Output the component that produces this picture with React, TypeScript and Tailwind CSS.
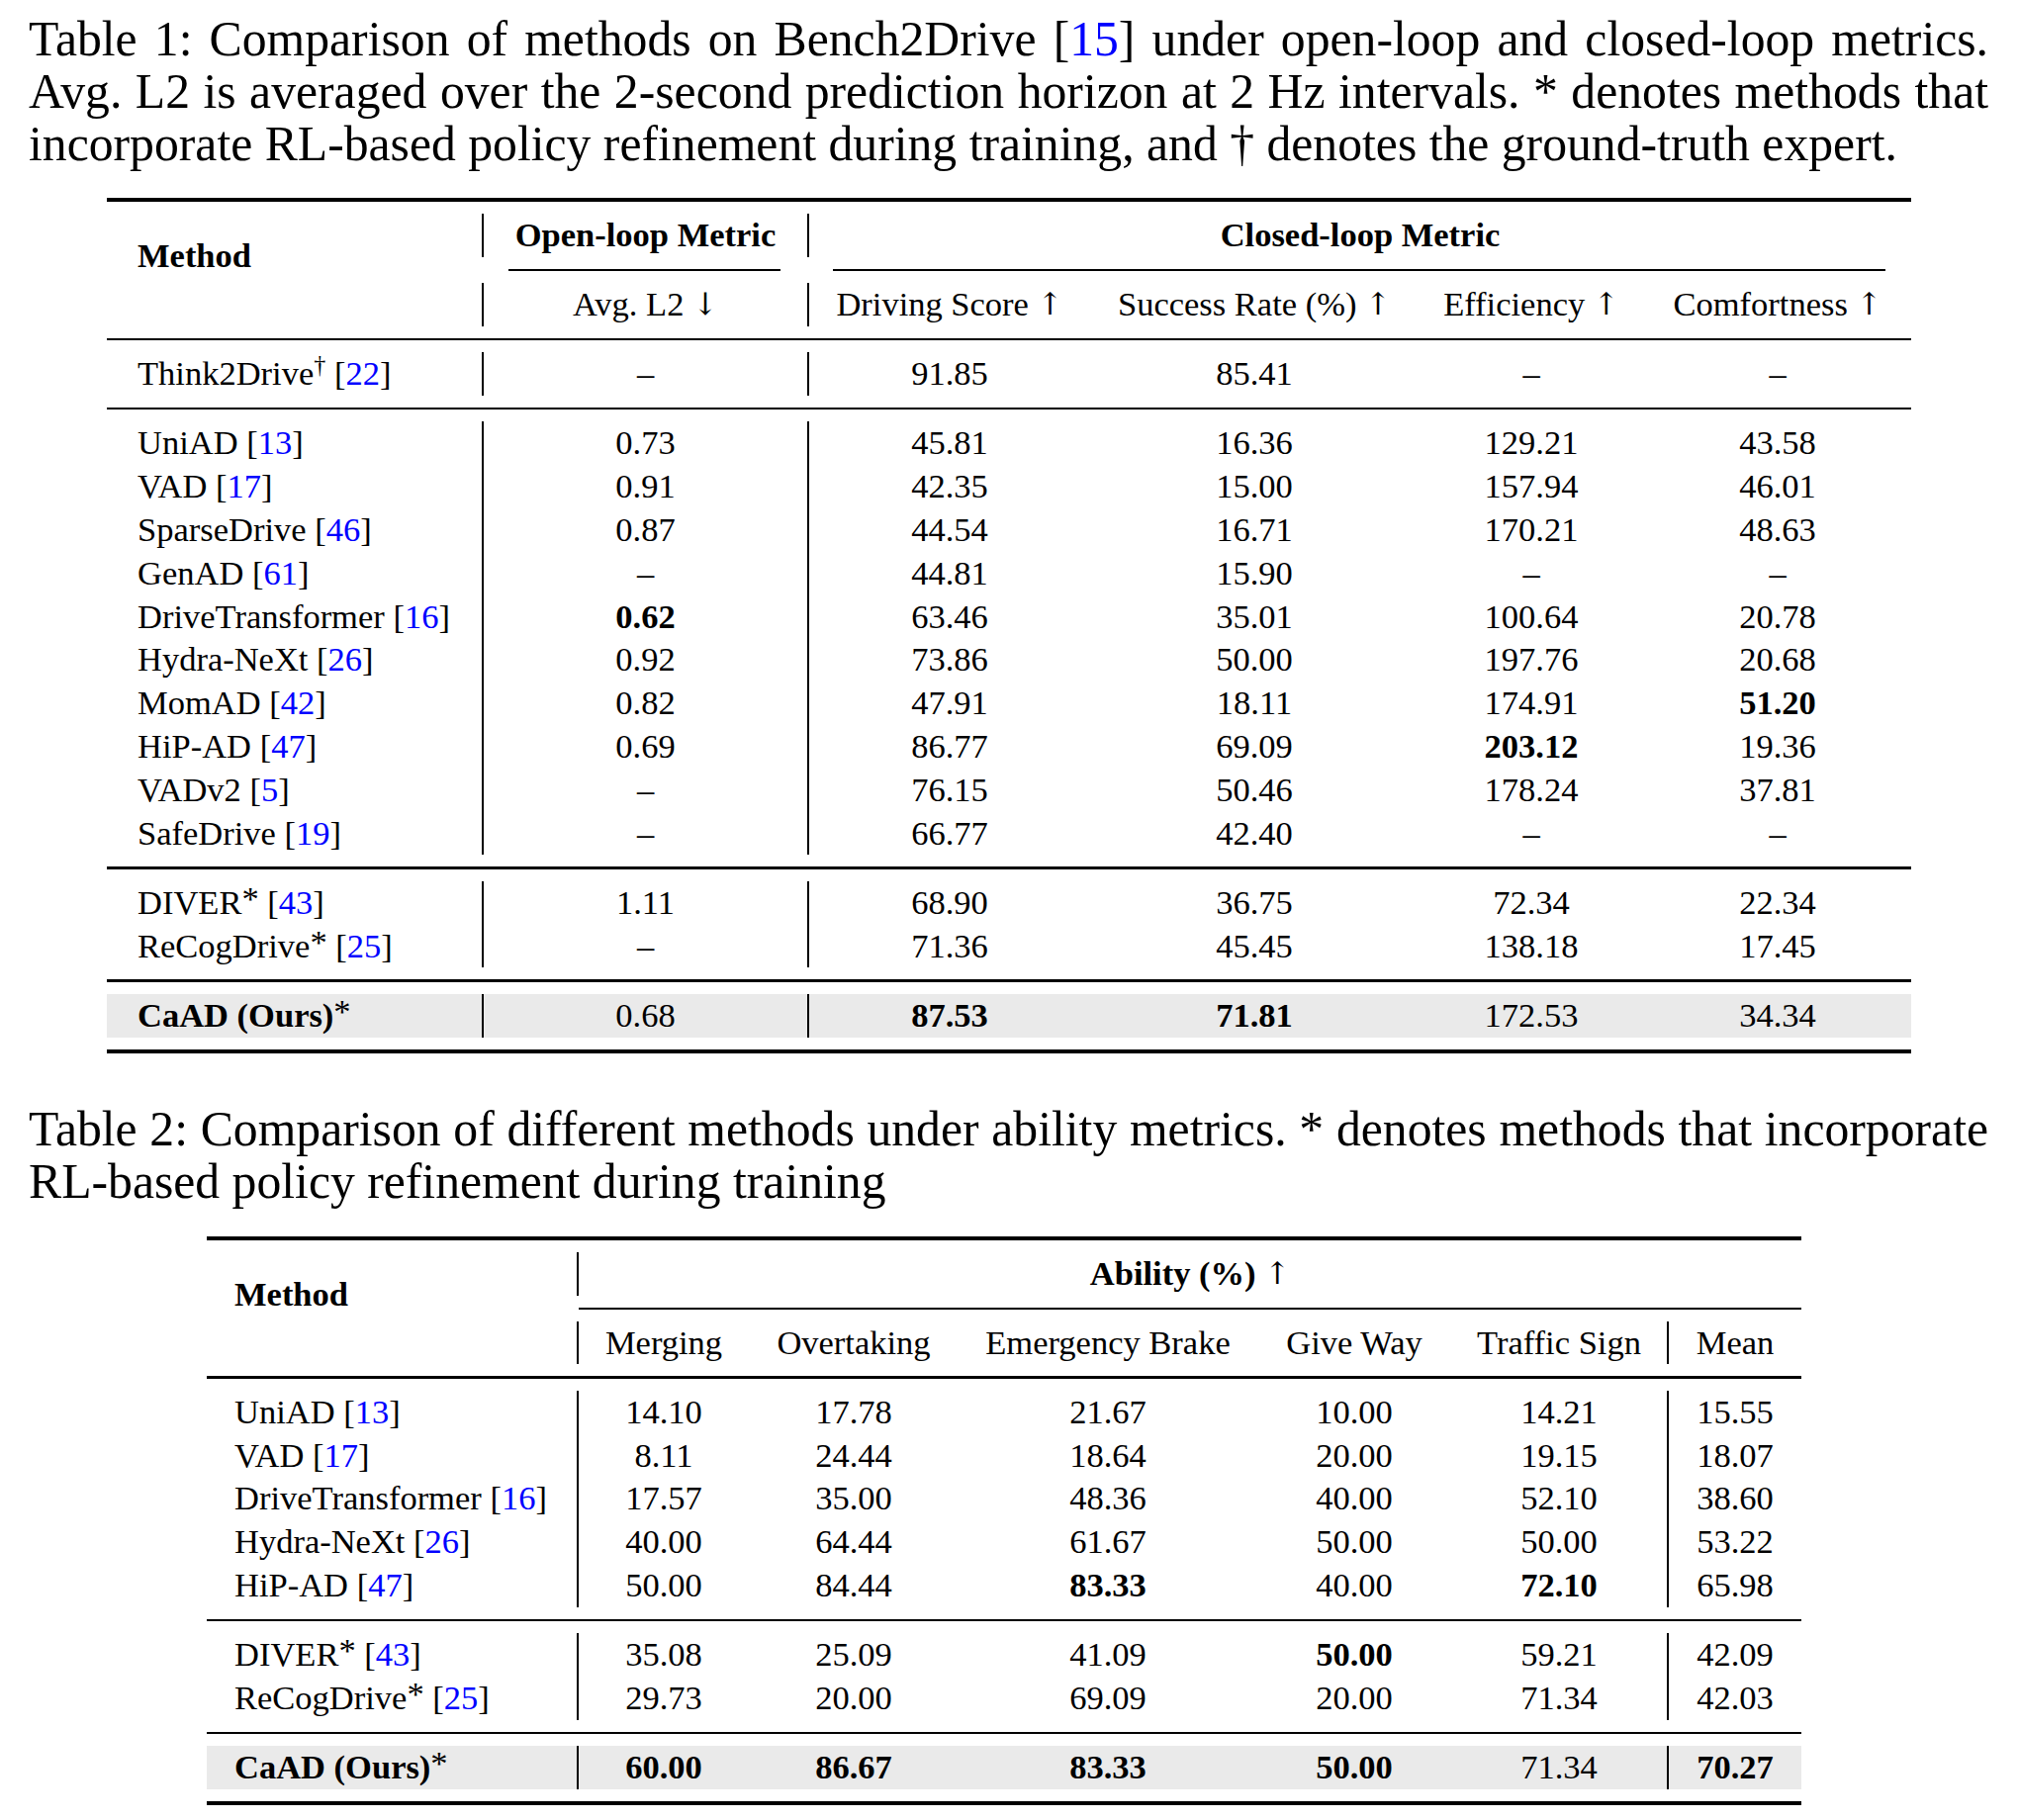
import React from "react";

type Method = { name: string; mark?: string; cite?: string; bold?: boolean };

// "!" in front of a value marks it as bold
const table1: { m: Method; v: string[] }[][] = [
  [{ m: { name: "Think2Drive", mark: "†", cite: "22" }, v: ["–", "91.85", "85.41", "–", "–"] }],
  [
    { m: { name: "UniAD", cite: "13" }, v: ["0.73", "45.81", "16.36", "129.21", "43.58"] },
    { m: { name: "VAD", cite: "17" }, v: ["0.91", "42.35", "15.00", "157.94", "46.01"] },
    { m: { name: "SparseDrive", cite: "46" }, v: ["0.87", "44.54", "16.71", "170.21", "48.63"] },
    { m: { name: "GenAD", cite: "61" }, v: ["–", "44.81", "15.90", "–", "–"] },
    { m: { name: "DriveTransformer", cite: "16" }, v: ["!0.62", "63.46", "35.01", "100.64", "20.78"] },
    { m: { name: "Hydra-NeXt", cite: "26" }, v: ["0.92", "73.86", "50.00", "197.76", "20.68"] },
    { m: { name: "MomAD", cite: "42" }, v: ["0.82", "47.91", "18.11", "174.91", "!51.20"] },
    { m: { name: "HiP-AD", cite: "47" }, v: ["0.69", "86.77", "69.09", "!203.12", "19.36"] },
    { m: { name: "VADv2", cite: "5" }, v: ["–", "76.15", "50.46", "178.24", "37.81"] },
    { m: { name: "SafeDrive", cite: "19" }, v: ["–", "66.77", "42.40", "–", "–"] },
  ],
  [
    { m: { name: "DIVER", mark: "*", cite: "43" }, v: ["1.11", "68.90", "36.75", "72.34", "22.34"] },
    { m: { name: "ReCogDrive", mark: "*", cite: "25" }, v: ["–", "71.36", "45.45", "138.18", "17.45"] },
  ],
];

const ours1 = { m: { name: "CaAD (Ours)", mark: "*", bold: true }, v: ["0.68", "!87.53", "!71.81", "172.53", "34.34"] };

const table2: { m: Method; v: string[] }[][] = [
  [
    { m: { name: "UniAD", cite: "13" }, v: ["14.10", "17.78", "21.67", "10.00", "14.21", "15.55"] },
    { m: { name: "VAD", cite: "17" }, v: ["8.11", "24.44", "18.64", "20.00", "19.15", "18.07"] },
    { m: { name: "DriveTransformer", cite: "16" }, v: ["17.57", "35.00", "48.36", "40.00", "52.10", "38.60"] },
    { m: { name: "Hydra-NeXt", cite: "26" }, v: ["40.00", "64.44", "61.67", "50.00", "50.00", "53.22"] },
    { m: { name: "HiP-AD", cite: "47" }, v: ["50.00", "84.44", "!83.33", "40.00", "!72.10", "65.98"] },
  ],
  [
    { m: { name: "DIVER", mark: "*", cite: "43" }, v: ["35.08", "25.09", "41.09", "!50.00", "59.21", "42.09"] },
    { m: { name: "ReCogDrive", mark: "*", cite: "25" }, v: ["29.73", "20.00", "69.09", "20.00", "71.34", "42.03"] },
  ],
];

const ours2 = { m: { name: "CaAD (Ours)", mark: "*", bold: true }, v: ["!60.00", "!86.67", "!83.33", "!50.00", "71.34", "!70.27"] };

function Cite({ n }: { n: string }) {
  return (
    <>
      [<span className="text-[#0000ff]">{n}</span>]
    </>
  );
}

function Arrow({ up }: { up?: boolean }) {
  return <span className="font-['DejaVu_Serif',serif] text-[0.9em] font-normal">{up ? "↑" : "↓"}</span>;
}

function Val({ v }: { v: string }) {
  if (v.startsWith("!")) return <span className="font-bold">{v.slice(1)}</span>;
  return <>{v}</>;
}

function MethodName({ m }: { m: Method }) {
  return (
    <span className="whitespace-nowrap">
      <span className={m.bold ? "font-bold" : ""}>{m.name}</span>
      {m.mark === "*" && <span className="relative -top-[0.12em] font-normal">*</span>}
      {m.mark === "†" && <sup className="text-[0.7em]">†</sup>}
      {m.cite && (
        <>
          {" "}
          <Cite n={m.cite} />
        </>
      )}
    </span>
  );
}

function HeavyRule() {
  return <div className="h-[4px] bg-black" />;
}

function LightRule() {
  return <div className="h-[2.5px] bg-black" />;
}

function Cell({ w, bar, children }: { w: string; bar?: boolean; children: React.ReactNode }) {
  return (
    <div className={`flex h-full items-center justify-center gap-[0.25em] ${w} ${bar ? "border-l-2 border-black" : ""}`}>
      {children}
    </div>
  );
}

const w1 = ["w-[329px]", "w-[286px]", "w-[332px]", "w-[228px]", "flex-1"];
const w2 = ["w-[174px]", "w-[212px]", "w-[302px]", "w-[196px]", "w-[218px]", "flex-1"];

function Row1({ r, shade }: { r: { m: Method; v: string[] }; shade?: boolean }) {
  return (
    <div className={`flex h-[43.8px] items-center ${shade ? "bg-[#eaeaea]" : ""}`}>
      <div className="w-[379px] pl-[31px]">
        <MethodName m={r.m} />
      </div>
      {r.v.map((v, i) => (
        <Cell key={i} w={w1[i]} bar={i < 2}>
          <Val v={v} />
        </Cell>
      ))}
    </div>
  );
}

function Row2({ r, shade }: { r: { m: Method; v: string[] }; shade?: boolean }) {
  return (
    <div className={`flex h-[43.8px] items-center ${shade ? "bg-[#eaeaea]" : ""}`}>
      <div className="w-[374px] pl-[28px]">
        <MethodName m={r.m} />
      </div>
      {r.v.map((v, i) => (
        <Cell key={i} w={w2[i]} bar={i === 0 || i === 5}>
          <Val v={v} />
        </Cell>
      ))}
    </div>
  );
}

function Line({ children, last }: { children: React.ReactNode; last?: boolean }) {
  return (
    <div className={last ? "whitespace-nowrap" : "whitespace-nowrap text-justify [text-align-last:justify]"}>
      {children}
    </div>
  );
}

export default function App() {
  return (
    <div className="min-h-[1840px] w-[2040px] bg-white pt-[13px] font-['Liberation_Serif','Times_New_Roman',serif] text-black">
      {/* Table 1 caption */}
      <div className="ml-[29px] w-[1981px] text-[49.7px] leading-[53px]">
        <Line>
          Table 1: Comparison of methods on Bench2Drive <Cite n="15" /> under open-loop and closed-loop metrics.
        </Line>
        <Line>Avg. L2 is averaged over the 2-second prediction horizon at 2 Hz intervals. * denotes methods that</Line>
        <Line last>incorporate RL-based policy refinement during training, and † denotes the ground-truth expert.</Line>
      </div>

      {/* Table 1 */}
      <div className="ml-[108px] mt-[28px] w-[1824px] text-[34.5px]">
        <HeavyRule />
        <div className="flex py-3">
          <div className="w-[379px] pl-[31px] pt-[21px] font-bold leading-[43.8px]">Method</div>
          <div className="flex flex-1 flex-col">
            <div className="flex h-[43.8px] font-bold">
              <Cell w="w-[329px]" bar>
                Open-loop Metric
              </Cell>
              <Cell w="flex-1" bar>
                Closed-loop Metric
              </Cell>
            </div>
            <div className="flex py-3">
              <div className="w-[329px] px-[27px]">
                <div className="h-[2px] bg-black" />
              </div>
              <div className="flex-1 px-[26px]">
                <div className="h-[2px] bg-black" />
              </div>
            </div>
            <div className="flex h-[43.8px]">
              <Cell w="w-[329px]" bar>
                Avg. L2 <Arrow />
              </Cell>
              <Cell w="w-[286px]" bar>
                Driving Score <Arrow up />
              </Cell>
              <Cell w="w-[332px]">
                Success Rate (%) <Arrow up />
              </Cell>
              <Cell w="w-[228px]">
                Efficiency <Arrow up />
              </Cell>
              <Cell w="flex-1">
                Comfortness <Arrow up />
              </Cell>
            </div>
          </div>
        </div>
        {table1.map((g, gi) => (
          <React.Fragment key={gi}>
            <LightRule />
            <div className="py-3">
              {g.map((r) => (
                <Row1 key={r.m.name} r={r} />
              ))}
            </div>
          </React.Fragment>
        ))}
        <LightRule />
        <div className="py-3">
          <Row1 r={ours1} shade />
        </div>
        <HeavyRule />
      </div>

      {/* Table 2 caption */}
      <div className="ml-[29px] mt-[50px] w-[1981px] text-[49.7px] leading-[53px]">
        <Line>
          Table 2: Comparison of different methods under ability metrics. * denotes methods that incorporate
        </Line>
        <Line last>RL-based policy refinement during training</Line>
      </div>

      {/* Table 2 */}
      <div className="ml-[209px] mt-[29px] w-[1612px] text-[34.5px]">
        <HeavyRule />
        <div className="flex py-3">
          <div className="w-[374px] pl-[28px] pt-[21px] font-bold leading-[43.8px]">Method</div>
          <div className="flex flex-1 flex-col">
            <div className="flex h-[43.8px] font-bold">
              <Cell w="flex-1" bar>
                Ability (%) <Arrow up />
              </Cell>
            </div>
            <div className="py-3 pl-[2px]">
              <div className="h-[2px] bg-black" />
            </div>
            <div className="flex h-[43.8px]">
              <Cell w="w-[174px]" bar>
                Merging
              </Cell>
              <Cell w="w-[212px]">Overtaking</Cell>
              <Cell w="w-[302px]">Emergency Brake</Cell>
              <Cell w="w-[196px]">Give Way</Cell>
              <Cell w="w-[218px]">Traffic Sign</Cell>
              <Cell w="flex-1" bar>
                Mean
              </Cell>
            </div>
          </div>
        </div>
        {table2.map((g, gi) => (
          <React.Fragment key={gi}>
            <LightRule />
            <div className="py-3">
              {g.map((r) => (
                <Row2 key={r.m.name} r={r} />
              ))}
            </div>
          </React.Fragment>
        ))}
        <LightRule />
        <div className="py-3">
          <Row2 r={ours2} shade />
        </div>
        <HeavyRule />
      </div>
    </div>
  );
}
